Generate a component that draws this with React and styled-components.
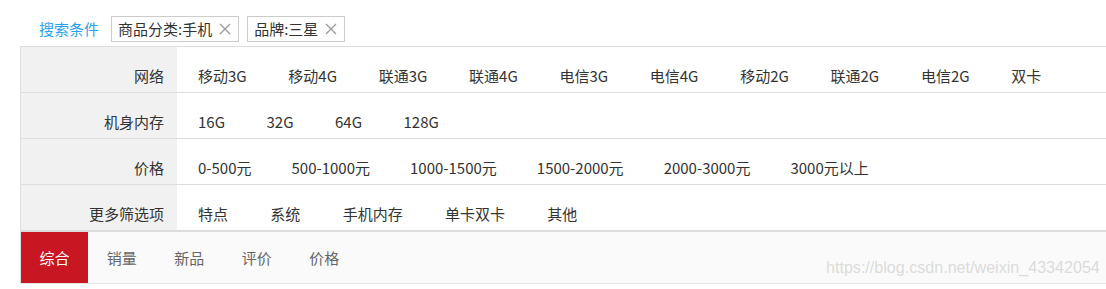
import React from "react";
import styled, { createGlobalStyle } from "styled-components";

const Global = createGlobalStyle`
  html, body { margin: 0; padding: 0; background: #fff; overflow: hidden; }
  body { font-family: "Noto Sans CJK SC", "Noto Sans", sans-serif; color: #333; }
  * { box-sizing: border-box; }
`;

const Page = styled.div`
  position: relative;
  width: 1106px;
  height: 289px;
  overflow: hidden;
  padding-left: 20px;
`;

const SearchBar = styled.div`
  display: flex;
  align-items: center;
  height: 46px;
  padding: 16px 0 4px 19px;
`;

const SearchTitle = styled.span`
  color: #28a3ef;
  font-size: 15px;
  line-height: 26px;
  margin-right: 12px;
`;

const Tag = styled.span`
  display: inline-flex;
  align-items: center;
  height: 26px;
  border: 1px solid #ccc;
  padding: 0 7px 0 6px;
  margin-right: 8px;
  font-size: 15px;
  color: #333;
  line-height: 24px;
`;

const Close = styled.svg`
  width: 12px;
  height: 12px;
  margin-left: 7px;
  display: block;
`;

const Panel = styled.div`
  width: 1200px;
  border-left: 1px solid #ddd;
  border-top: 1px solid #ddd;
`;

const Row = styled.div`
  display: flex;
  height: 46px;
  border-bottom: 1px solid #ddd;
`;

const Label = styled.div`
  flex: 0 0 156px;
  background: #f1f1f1;
  text-align: right;
  padding: 18px 13px 0 0;
  font-size: 15px;
  line-height: 22px;
  color: #333;
`;

const Options = styled.div`
  display: flex;
  padding: 18px 0 0 21px;
  font-size: 15px;
  line-height: 22px;
  color: #333;
`;

const Option = styled.span`
  margin-right: ${(p) => p.$gap}px;
  white-space: nowrap;
`;

const SortBar = styled.div`
  display: flex;
  height: 53px;
  border-top: 1px solid #ddd;
  border-bottom: 1px solid #e4e4e4;
  background: #fafafa;
`;

const SortTab = styled.span`
  display: flex;
  align-items: center;
  justify-content: center;
  width: ${(p) => (p.$active ? 67 : 67.5)}px;
  height: 51px;
  font-size: 15px;
  color: ${(p) => (p.$active ? "#fff" : "#666")};
  background: ${(p) => (p.$active ? "#c81623" : "transparent")};
`;

const Watermark = styled.div`
  position: absolute;
  left: 826px;
  top: 258px;
  font-family: "Liberation Sans", Arial, sans-serif;
  font-size: 16.1px;
  color: rgba(205, 205, 205, 0.7);
  white-space: nowrap;
`;

const X = () => (
  <Close viewBox="0 0 12 12">
    <path d="M1 1L11 11M11 1L1 11" stroke="#999" strokeWidth="1.3" fill="none" />
  </Close>
);

const rows = [
  { label: "网络", gap: 41.7, items: ["移动3G", "移动4G", "联通3G", "联通4G", "电信3G", "电信4G", "移动2G", "联通2G", "电信2G", "双卡"] },
  { label: "机身内存", gap: 41.5, items: ["16G", "32G", "64G", "128G"] },
  { label: "价格", gap: 40, items: ["0-500元", "500-1000元", "1000-1500元", "1500-2000元", "2000-3000元", "3000元以上"] },
  { label: "更多筛选项", gap: 42.3, items: ["特点", "系统", "手机内存", "单卡双卡", "其他"] },
];

export default function App() {
  return (
    <>
      <Global />
      <Page>
        <SearchBar>
          <SearchTitle>搜索条件</SearchTitle>
          <Tag>
            商品分类:手机
            <X />
          </Tag>
          <Tag>
            品牌:三星
            <X />
          </Tag>
        </SearchBar>
        <Panel>
          {rows.map((r) => (
            <Row key={r.label}>
              <Label>{r.label}</Label>
              <Options>
                {r.items.map((it) => (
                  <Option key={it} $gap={r.gap}>
                    {it}
                  </Option>
                ))}
              </Options>
            </Row>
          ))}
          <SortBar>
            <SortTab $active>综合</SortTab>
            <SortTab>销量</SortTab>
            <SortTab>新品</SortTab>
            <SortTab>评价</SortTab>
            <SortTab>价格</SortTab>
          </SortBar>
        </Panel>
        <Watermark>https://blog.csdn.net/weixin_43342054</Watermark>
      </Page>
    </>
  );
}
